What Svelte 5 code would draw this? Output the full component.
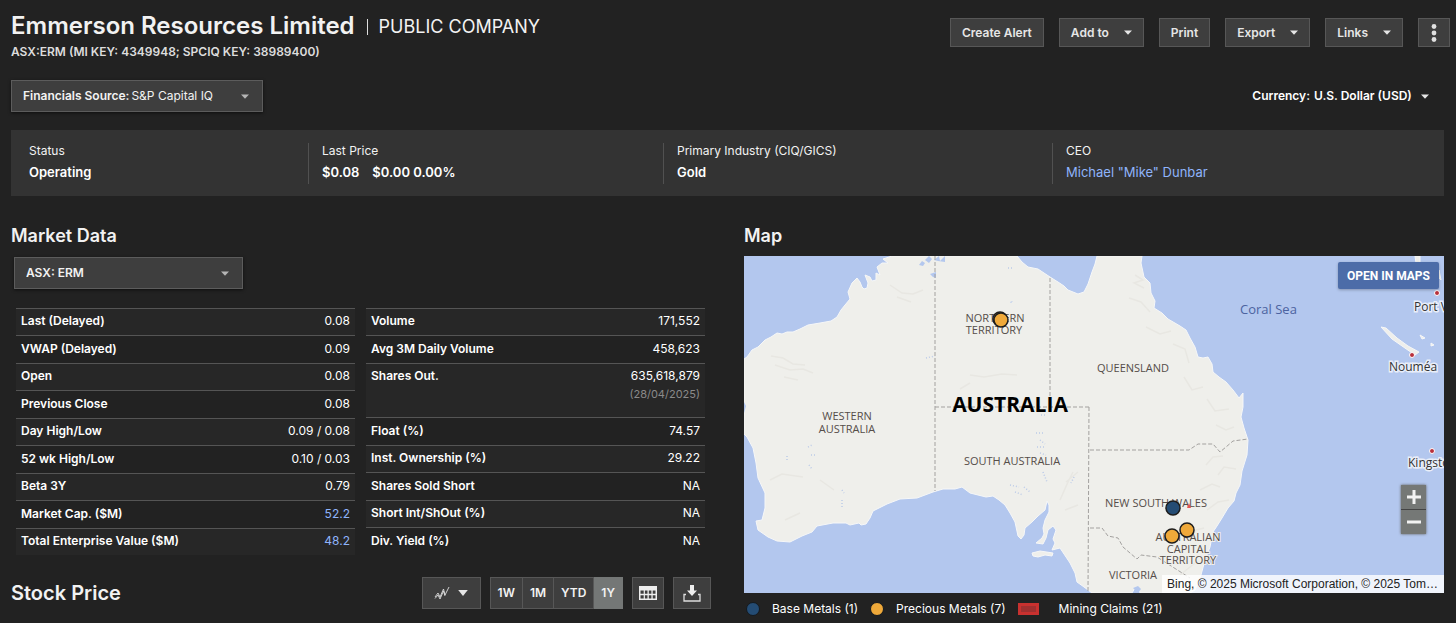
<script>
  const summary = [
    { label: 'Status', value: 'Operating' },
    { label: 'Last Price', value: '$0.08', change: '$0.00 0.00%' },
    { label: 'Primary Industry (CIQ/GICS)', value: 'Gold' },
    { label: 'CEO', value: 'Michael "Mike" Dunbar', link: true }
  ];

  const tables = [
    [
      { name: 'Last (Delayed)', value: '0.08' },
      { name: 'VWAP (Delayed)', value: '0.09' },
      { name: 'Open', value: '0.08' },
      { name: 'Previous Close', value: '0.08' },
      { name: 'Day High/Low', value: '0.09 / 0.08' },
      { name: '52 wk High/Low', value: '0.10 / 0.03' },
      { name: 'Beta 3Y', value: '0.79' },
      { name: 'Market Cap. ($M)', value: '52.2', link: true },
      { name: 'Total Enterprise Value ($M)', value: '48.2', link: true }
    ],
    [
      { name: 'Volume', value: '171,552' },
      { name: 'Avg 3M Daily Volume', value: '458,623' },
      { name: 'Shares Out.', value: '635,618,879', note: '(28/04/2025)' },
      { name: 'Float (%)', value: '74.57' },
      { name: 'Inst. Ownership (%)', value: '29.22' },
      { name: 'Shares Sold Short', value: 'NA' },
      { name: 'Short Int/ShOut (%)', value: 'NA' },
      { name: 'Div. Yield (%)', value: 'NA' }
    ]
  ];

  const ranges = ['1W', '1M', 'YTD', '1Y'];
  let range = $state('1Y');

  const pins = [
    { x: 1000, y: 319, color: '#efa93a' },
    { x: 1001, y: 320, color: '#efa93a' },
    { x: 1173, y: 508, color: '#244c74' },
    { x: 1172, y: 536, color: '#efa93a' },
    { x: 1187, y: 530, color: '#efa93a' }
  ];

  const regions = [
    { x: 995, y: 322, text: 'NORTHERN' },
    { x: 994, y: 334, text: 'TERRITORY' },
    { x: 1133, y: 372, text: 'QUEENSLAND' },
    { x: 847, y: 420, text: 'WESTERN' },
    { x: 847, y: 433, text: 'AUSTRALIA' },
    { x: 1012, y: 465, text: 'SOUTH AUSTRALIA' },
    { x: 1156, y: 507, text: 'NEW SOUTH WALES' },
    { x: 1188, y: 541, text: 'AUSTRALIAN' },
    { x: 1188, y: 553, text: 'CAPITAL' },
    { x: 1188, y: 564, text: 'TERRITORY' },
    { x: 1133, y: 579, text: 'VICTORIA' }
  ];

  const towns = [
    { x: 1437, y: 293, tx: 1414, ty: 311, text: 'Port Vila' },
    { x: 1412, y: 355, tx: 1389, ty: 371, text: 'Nouméa' },
    { x: 1432, y: 451, tx: 1408, ty: 467, text: 'Kingston' }
  ];
</script>

{#snippet caret()}
  <svg class="caret" viewBox="0 0 8 5" aria-hidden="true"><path d="M0 0.5h8L4 4.8z" /></svg>
{/snippet}

<main>
  <header>
    <div class="identity">
      <h1>Emmerson Resources Limited <span class="bar"></span><span class="kind">PUBLIC COMPANY</span></h1>
      <p class="keys">ASX:ERM (MI KEY: 4349948; SPCIQ KEY: 38989400)</p>
    </div>
    <div class="actions">
      <button class="btn">Create Alert</button>
      <button class="btn">Add to {@render caret()}</button>
      <button class="btn">Print</button>
      <button class="btn">Export {@render caret()}</button>
      <button class="btn">Links {@render caret()}</button>
      <button class="btn more" aria-label="More actions">
        <svg viewBox="0 0 6 20" aria-hidden="true"><circle cx="3" cy="3.500" r="2.400" /><circle cx="3" cy="10" r="2.400" /><circle cx="3" cy="16.500" r="2.400" /></svg>
      </button>
    </div>
  </header>

  <div class="options">
    <div class="picker source">
      <label for="source">Financials Source:</label>
      <select id="source"><option>S&amp;P Capital IQ</option></select>
      {@render caret()}
    </div>
    <div class="currency">
      <label for="currency">Currency:</label>
      <select id="currency"><option>U.S. Dollar (USD)</option></select>
      {@render caret()}
    </div>
  </div>

  <dl class="summary">
    {#each summary as item}
      <div>
        <dt>{item.label}</dt>
        <dd>
          {#if item.link}<a href="#ceo">{item.value}</a>{:else}<span>{item.value}</span>{/if}
          {#if item.change}<span>{item.change}</span>{/if}
        </dd>
      </div>
    {/each}
  </dl>

  <div class="columns">
    <section>
      <h2>Market Data</h2>
      <div class="picker ticker">
        <select aria-label="Ticker"><option>ASX: ERM</option></select>
        {@render caret()}
      </div>
      <div class="tables">
        {#each tables as rows}
          <table>
            <tbody>
              {#each rows as row}
                <tr class:tall={row.note}>
                  <th scope="row">{row.name}</th>
                  <td>
                    {#if row.link}<a href="#detail">{row.value}</a>{:else}{row.value}{/if}
                    {#if row.note}<small>{row.note}</small>{/if}
                  </td>
                </tr>
              {/each}
            </tbody>
          </table>
        {/each}
      </div>
      <div class="stock">
        <h2>Stock Price</h2>
        <div class="tools">
          <button class="tool chart" aria-label="Chart type">
            <svg width="16" height="14" viewBox="0 0 16 14" aria-hidden="true"><path d="M1 11l3-4 2 4 3.500-8 1.500 6L15 1M1 12.500l3-3.500 2 4 3.500-8 1.500 5" fill="none" stroke="#ddd" stroke-width="0.900" /></svg>
            <svg class="caret wide" viewBox="0 0 8 5" aria-hidden="true"><path d="M0 0h8L4 5z" /></svg>
          </button>
          <div class="ranges">
            {#each ranges as r}
              <button class:active={range === r} aria-pressed={range === r} onclick={() => (range = r)}>{r}</button>
            {/each}
          </div>
          <button class="tool" aria-label="Table view">
            <svg width="18" height="14" viewBox="0 0 18 14" aria-hidden="true"><path fill="#eee" fill-rule="evenodd" d="M0 0h18v14H0zM1.500 4.500v3.300h3.200V4.500zm4.400 0v3.300h2.600V4.500zm3.900 0v3.300h2.600V4.500zm3.900 0v3.300h2.800V4.500zM1.500 9.200v3.300h3.200V9.200zm4.400 0v3.300h2.600V9.200zm3.900 0v3.300h2.600V9.200zm3.900 0v3.300h2.800V9.200z" /></svg>
          </button>
          <button class="tool download" aria-label="Download">
            <svg width="18" height="17" viewBox="0 0 18 17" aria-hidden="true"><path fill="#eee" d="M7 0h4v5.500h3L9 11 4 5.500h3z" /><path d="M3 9.500H1V16h16V9.500h-2" fill="none" stroke="#ddd" stroke-width="1.300" /></svg>
          </button>
        </div>
      </div>
    </section>

    <section>
      <h2>Map</h2>
      <div class="map">
        <svg class="canvas" viewBox="744 256 700 337" role="img" aria-label="Map of Australia">
          <rect x="744" y="256" width="700" height="337" fill="#b3c7ee" />
          <path
            class="land"
            d="M744 359L747 357L752 350L758 347L765 340L771 337L777 333L782 334L787 332L793 332L800 329L808 325L820 323L831 321L837 317L841 310L845 305L850 299L848 292L852 283L857 278L860 282L862 287L864 289L867 288L868 283L865 275L870 277L872 281L876 280L876 273L880 275L877 267L882 263L888 263L883 259L892 256H1017L1022 262L1028 267L1038 269L1050 277L1058 282L1064 286L1068 290L1078 294L1084 292L1088 284L1092 272L1095 264L1097 256H1142L1141 263L1144 277L1150 283L1151 293L1155 301L1154 308L1162 313L1168 319L1180 326L1186 330L1190 338L1195 347L1198 357L1203 358L1208 357L1212 364L1213 372L1219 377L1226 382L1233 390L1239 398L1243 393L1243 407L1241 417L1244 428L1248 440L1247 455L1242 471L1240 485L1236 493L1234 501L1228 508L1222 518L1217 526L1213 532L1210 547L1205 560L1201 575L1195 590L1190 593H1140L1139 588L1135 588L1132 593H1092L1084 587L1077 582L1075 573L1070 563L1064 554L1060 548L1052 550L1055 543L1053 539L1056 530L1053 526L1048 530L1046 538L1043 544L1036 543L1042 538L1044 534L1043 528L1045 520L1049 512L1049 505L1047 501L1045 510L1038 516L1032 522L1025 528L1024 535L1021 539L1018 536L1015 522L1010 513L1005 505L999 500L993 496L986 497L970 493L962 487L955 489L943 489L933 492L917 498L900 499L887 504L873 511L870 518L866 524L861 525L859 523L850 525L846 523L833 523L817 526L812 532L802 536L790 542L777 541L768 537L758 530L756 521L762 520L765 508L765 493L758 478L756 463L753 448L747 437L744 434z"
          />
          <path class="land" d="M1032 553L1040 551L1053 553L1052 556L1045 555L1038 557L1033 556zM1381 327L1386 328L1397 338L1408 346L1419 352L1415 355L1402 346L1392 339zM1415 256L1420 256L1420 266L1416 263zM1420 335l5 3-3 1zM1431 343l3 2-3 1zM1439 270l2 10-2 -2z" />
          <g fill="#b3c7ee">
            <path d="M919 265l3-4 3 2-2 3zM925 260l4-4 3 3-3 4zM934 260l5-4 1 5 5-5v6l-7-1zM930 274l6-2v6l-3-1zM744 402l2 4-2 7zM1010 302l3-1-2 2z" />
            <path d="M1133 588l5-2 3 3-3 4z" />
          </g>
          <g class="relief">
            <path d="M771 356l12 2 10 6 12 1M775 365l15 5 13-1 10 4M784 377l14 3M890 285l12 8 11 1 10-4M897 297l14 5M970 375l14 2 18-3 15 1M960 389l10-6M1135 275l8 5-9 3 10 5M1129 298l12 4 9 10M1146 327l14 7 11-3M1173 344l12 5 4 14M1184 377l8 13 11-3M1207 399l8 12 14-2M1216 425l10 5 8-3M1206 465l7-8 10-1M1218 475l6-8 12 2M1200 490l12-6 8 3M1207 510l11-8 11-2M1060 500l8-18 5-10M1066 482l12-10M1065 510l13-5M1180 575l15-12M1188 540l8-10 8-2M820 480l14 10M770 480l12-6 21 3M785 520l15-7" />
          </g>
          <g class="lakes">
            <path d="M808 447l4-2M811 455h5M809 465l3 4M842 490l2 3M842 500v8M787 456v6M1040 440l5 4M1037 447h8M1040 453l6 2M1010 485l9 2M1015 492l8 3M1024 487l6 5M1043 472l4 10M1074 477l-3 6M1041 415h6M1036 433h9M926 358l9-2M1008 268h4" />
          </g>
          <path class="border" d="M935 256V491M935 407H1089M1050 278V407M1089 407L1088 593M1090 450H1189L1198 444H1213L1220 452L1226 447L1233 441L1248 439M1090 528H1102L1108 536L1118 538L1123 547L1137 559L1141 555L1157 557L1190 578" />
          {#each regions as r}
            <text class="region" x={r.x} y={r.y}>{r.text}</text>
          {/each}
          <text class="country" x="1010" y="412">AUSTRALIA</text>
          <text class="sea" x="1240" y="314">Coral Sea</text>
          <path d="M1187 508l2-5 2 5z" fill="#e25555" />
          {#each towns as t}
            <circle cx={t.x} cy={t.y} r="2.500" fill="#b8303c" stroke="#fff" />
            <text class="town" x={t.tx} y={t.ty}>{t.text}</text>
          {/each}
          {#each pins as p}
            <circle cx={p.x} cy={p.y} r="7" fill={p.color} stroke="#1d1d1d" stroke-width="1.500" />
          {/each}
        </svg>
        <button class="open">OPEN IN MAPS</button>
        <div class="zoom">
          <button aria-label="Zoom in"><svg viewBox="0 0 14 14" aria-hidden="true"><path d="M7 0v14M0 7h14" /></svg></button>
          <button aria-label="Zoom out"><svg viewBox="0 0 14 14" aria-hidden="true"><path d="M0 7h14" /></svg></button>
        </div>
        <div class="credit">Bing, © 2025 Microsoft Corporation, © 2025 Tom…</div>
      </div>
      <ul class="legend">
        <li><i class="dot base"></i>Base Metals (1)</li>
        <li><i class="dot precious"></i>Precious Metals (7)</li>
        <li><i class="claim"></i>Mining Claims (21)</li>
      </ul>
    </section>
  </div>
</main>

<style>
  :global(body) {
    margin: 0;
    background: #222;
  }
  main {
    padding: 12px 12px 0 11px;
    color: #f2f2f2;
    font: 400 12px/16px Inter, Roboto, sans-serif;
  }
  h1, h2, p, dl, dd, ul {
    margin: 0;
    padding: 0;
  }
  button, select {
    font: inherit;
    color: inherit;
  }
  a {
    color: #8fb4fb;
    text-decoration: none;
  }
  header {
    display: flex;
    justify-content: space-between;
    align-items: flex-start;
    margin-right: -6px;
  }
  h1 {
    display: flex;
    align-items: center;
    font-size: 24px;
    line-height: 28px;
    font-weight: 600;
  }
  .bar {
    width: 1px;
    height: 16px;
    margin: 2px 11px 0 12px;
    background: #ddd;
  }
  .kind {
    padding-top: 2px;
    font-size: 18px;
    line-height: 26px;
    font-weight: 400;
  }
  .keys {
    margin-top: 4px;
    font-weight: 600;
    color: #ddd;
  }
  .actions {
    display: flex;
    gap: 15px;
    padding-top: 6px;
  }
  .btn {
    display: flex;
    align-items: center;
    gap: 15px;
    height: 29px;
    padding: 0 11px;
    border: 1px solid #575757;
    background: #3e3e3e;
    font-weight: 600;
    color: #e6e6e6;
  }
  .more svg {
    width: 6px;
    height: 20px;
    margin: 0 1px;
    fill: #e0e0e0;
  }
  .caret {
    width: 8px;
    height: 5px;
    flex: none;
    fill: #e6e6e6;
  }
  .caret.wide {
    width: 10px;
    height: 6px;
  }
  .options {
    display: flex;
    justify-content: space-between;
    align-items: center;
    margin-top: 20px;
  }
  .picker {
    display: flex;
    align-items: center;
    box-sizing: border-box;
    height: 32px;
    padding: 0 13px 0 11px;
    border: 1px solid #5c5c5c;
    background: #3e3e3e;
    box-shadow: 0 1px 3px #0009;
  }
  .picker .caret {
    fill: #b5b5b5;
  }
  select {
    appearance: none;
    border: 0;
    padding: 0;
    background: none;
  }
  .picker select {
    flex: 1;
  }
  .source {
    width: 252px;
    gap: 2px;
  }
  label {
    font-weight: 600;
  }
  .currency {
    display: flex;
    align-items: center;
    gap: 4px;
    padding-right: 15px;
    font-weight: 600;
    color: #fff;
  }
  .currency .caret {
    margin-left: 4px;
  }
  .summary {
    display: grid;
    grid-template-columns: 297fr 355fr 389fr 392fr;
    margin-top: 18px;
    padding: 13px 0 12px;
    background: #333;
  }
  .summary div {
    padding: 0 0 4px 13px;
    border-left: 1px solid #515151;
  }
  .summary div:first-child {
    padding-left: 17px;
    border-color: transparent;
  }
  dd {
    display: flex;
    gap: 13px;
    margin-top: 5px;
    font-size: 13px;
    font-weight: 600;
    color: #fff;
  }
  dd a {
    font-weight: 400;
  }
  .columns {
    display: grid;
    grid-template-columns: 1fr 1fr;
    gap: 33px;
    margin-top: 28px;
  }
  section {
    min-width: 0;
  }
  h2 {
    font-size: 18px;
    line-height: 24px;
    font-weight: 600;
  }
  .ticker {
    width: 229px;
    margin: 9px 0 0 3px;
    font-weight: 600;
  }
  .tables {
    display: grid;
    grid-template-columns: 1fr 1fr;
    gap: 11px;
    align-items: start;
    margin: 19px 6px 0 5px;
  }
  table {
    width: 100%;
    border-collapse: separate;
    border-spacing: 0;
  }
  tr {
    height: 28px;
  }
  tr:nth-child(odd) {
    height: 27px;
    background: #272727;
  }
  tr.tall:nth-child(odd) {
    height: 54px;
  }
  th, td {
    padding: 0 5px 2px;
    border-top: 1px solid #555;
    text-align: left;
    font-weight: 600;
    color: #fff;
  }
  td {
    text-align: right;
    font-weight: 400;
  }
  .tall th, .tall td {
    padding-top: 4px;
    vertical-align: top;
  }
  small {
    display: block;
    margin-top: 2px;
    font-size: 11px;
    color: #8a8a8a;
  }
  .stock {
    display: flex;
    justify-content: space-between;
    align-items: center;
    margin-top: 22px;
  }
  .stock h2 {
    font-size: 20px;
  }
  .tools {
    display: flex;
    gap: 9px;
  }
  .tool, .ranges button {
    display: flex;
    align-items: center;
    justify-content: center;
    box-sizing: border-box;
    height: 32px;
    padding: 0 6px;
    border: 1px solid #575757;
    background: #3e3e3e;
    font-weight: 600;
  }
  .chart {
    gap: 8px;
    width: 59px;
  }
  .download {
    width: 38px;
  }
  .ranges {
    display: flex;
  }
  .ranges button {
    padding: 0 7px;
  }
  .ranges button + button {
    border-left: 0;
  }
  .ranges .active {
    background: #747776;
    border-color: #747776;
  }
  .map {
    position: relative;
    margin-top: 8px;
    overflow: hidden;
  }
  .canvas {
    display: block;
    width: 100%;
    height: auto;
    font-family: "Open Sans", "Noto Sans", sans-serif;
  }
  .land {
    fill: #efefeb;
    stroke: #f6f7f8;
  }
  .relief {
    fill: none;
    stroke: #e8e7e2;
    stroke-width: 1.5;
  }
  .lakes {
    fill: none;
    stroke: #bccbe8;
    stroke-width: 1.5;
    stroke-dasharray: 1 2;
  }
  .border {
    fill: none;
    stroke: #a3a19f;
    stroke-dasharray: 4 2;
  }
  .region {
    font-size: 11px;
    font-weight: 500;
    text-anchor: middle;
    fill: #554d49;
    paint-order: stroke;
    stroke: #efefeb;
    stroke-width: 2;
  }
  .country {
    font-size: 21px;
    font-weight: 700;
    text-anchor: middle;
    fill: #000;
  }
  .sea {
    font-size: 13px;
    fill: #4c63a0;
  }
  .town {
    font-size: 12px;
    font-weight: 500;
    fill: #333;
    paint-order: stroke;
    stroke: #e9eef9;
    stroke-width: 3;
  }
  .open {
    position: absolute;
    top: 6px;
    right: 5px;
    height: 27px;
    padding: 0 9px;
    border: 0;
    border-radius: 2px;
    background: #4c6ca8;
    color: #fff;
    font-family: Roboto, sans-serif;
    font-weight: 700;
    box-shadow: 0 1px 3px #0004;
  }
  .zoom {
    position: absolute;
    right: 18px;
    bottom: 59px;
    display: grid;
    gap: 1px;
    border-radius: 2px;
    background: #444;
    box-shadow: 0 0 2px 1px #6668;
  }
  .zoom button {
    display: grid;
    place-items: center;
    width: 25px;
    height: 24px;
    padding: 0;
    border: 0;
    background: #757876;
  }
  .zoom svg {
    width: 14px;
    height: 14px;
    fill: none;
    stroke: #f2f2f2;
    stroke-width: 3;
  }
  .credit {
    position: absolute;
    right: 0;
    bottom: 0;
    padding: 1px 6px 1px 5px;
    background: #fffc;
    color: #222;
    font-family: "Liberation Sans", Arial, sans-serif;
  }
  .legend {
    display: flex;
    margin-top: 8px;
    list-style: none;
    color: #fff;
  }
  .legend li {
    display: flex;
    align-items: center;
    gap: 12px;
    margin: 0 10px 0 2px;
  }
  .dot {
    box-sizing: border-box;
    width: 14px;
    height: 14px;
    border: 1px solid #15191e;
    border-radius: 50%;
  }
  .base {
    background: #244c74;
  }
  .precious {
    background: #efa93a;
  }
  .claim {
    box-sizing: border-box;
    width: 21px;
    height: 12px;
    margin-right: 8px;
    border: 3px solid #c8312f;
    background: #a03030;
  }
</style>
